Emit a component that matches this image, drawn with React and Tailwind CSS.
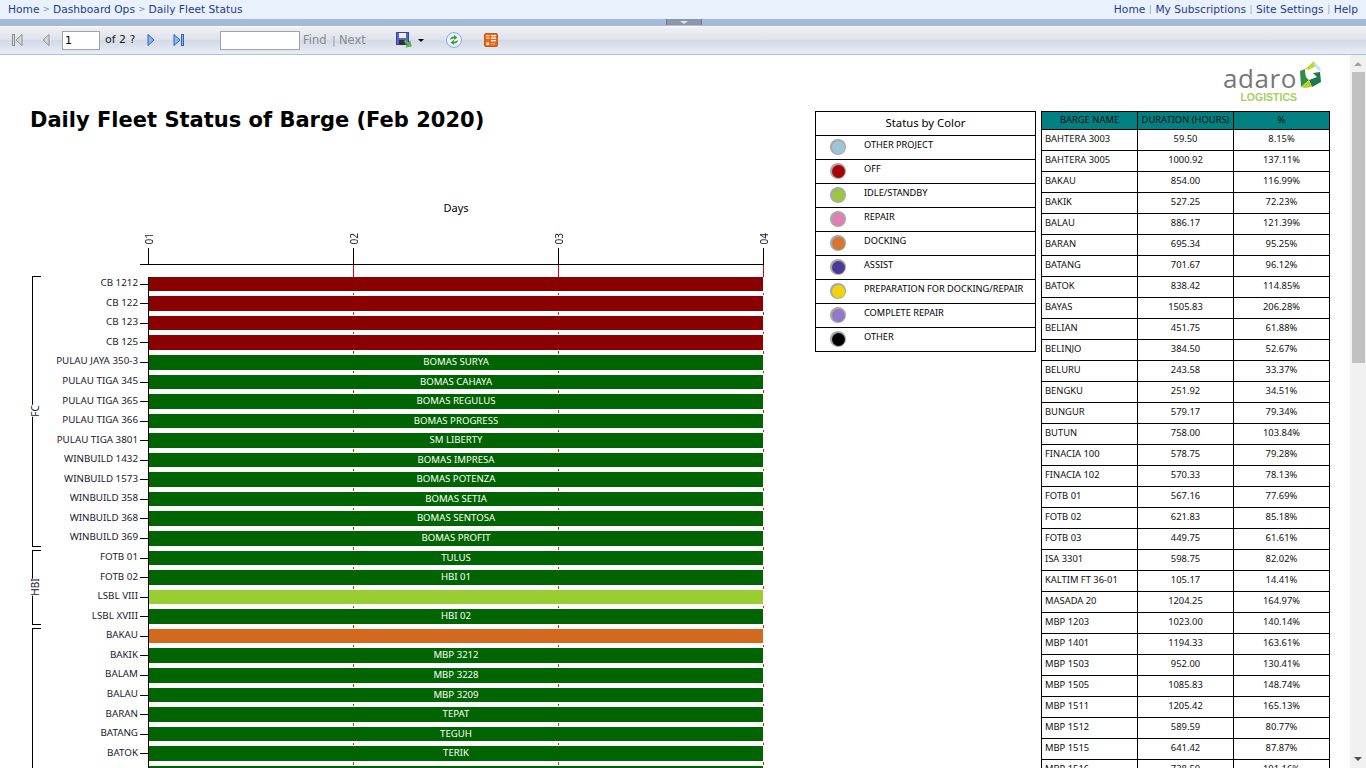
import React from 'react'

const tahoma = "font-['Noto_Sans','Open_Sans',sans-serif]"

const groups = [
  {
    name: 'FC',
    height: 'h-[271px]',
    rows: [
      ['CB 1212', 'off', ''], ['CB 122', 'off', ''], ['CB 123', 'off', ''], ['CB 125', 'off', ''],
      ['PULAU JAYA 350-3', 'on', 'BOMAS SURYA'], ['PULAU TIGA 345', 'on', 'BOMAS CAHAYA'],
      ['PULAU TIGA 365', 'on', 'BOMAS REGULUS'], ['PULAU TIGA 366', 'on', 'BOMAS PROGRESS'],
      ['PULAU TIGA 3801', 'on', 'SM LIBERTY'], ['WINBUILD 1432', 'on', 'BOMAS IMPRESA'],
      ['WINBUILD 1573', 'on', 'BOMAS POTENZA'], ['WINBUILD 358', 'on', 'BOMAS SETIA'],
      ['WINBUILD 368', 'on', 'BOMAS SENTOSA'], ['WINBUILD 369', 'on', 'BOMAS PROFIT'],
    ],
  },
  {
    name: 'HBI',
    height: 'h-[75px]',
    rows: [
      ['FOTB 01', 'on', 'TULUS'], ['FOTB 02', 'on', 'HBI 01'],
      ['LSBL VIII', 'idle', ''], ['LSBL XVIII', 'on', 'HBI 02'],
    ],
  },
  {
    name: '',
    height: 'h-[400px]',
    rows: [
      ['BAKAU', 'dock', ''], ['BAKIK', 'on', 'MBP 3212'], ['BALAM', 'on', 'MBP 3228'],
      ['BALAU', 'on', 'MBP 3209'], ['BARAN', 'on', 'TEPAT'], ['BATANG', 'on', 'TEGUH'],
      ['BATOK', 'on', 'TERIK'], ['', 'on', ''],
    ],
  },
]

const barColors = {
  off: 'bg-[#8b0000]',
  on: 'bg-[#006400]',
  idle: 'bg-[#9acd32]',
  dock: 'bg-[#d2691e]',
}

const legend = [
  ['OTHER PROJECT', 'bg-[#9fc4d8]'],
  ['OFF', 'bg-[#a80008]'],
  ['IDLE/STANDBY', 'bg-[#9ac644]'],
  ['REPAIR', 'bg-[#e07fb0]'],
  ['DOCKING', 'bg-[#d9752f]'],
  ['ASSIST', 'bg-[#4b3a98]'],
  ['PREPARATION FOR DOCKING/REPAIR', 'bg-[#f2d40c]'],
  ['COMPLETE REPAIR', 'bg-[#9478c8]'],
  ['OTHER', 'bg-black'],
]

const barges = [
  ['BAHTERA 3003', '59.50', '8.15%'], ['BAHTERA 3005', '1000.92', '137.11%'], ['BAKAU', '854.00', '116.99%'],
  ['BAKIK', '527.25', '72.23%'], ['BALAU', '886.17', '121.39%'], ['BARAN', '695.34', '95.25%'],
  ['BATANG', '701.67', '96.12%'], ['BATOK', '838.42', '114.85%'], ['BAYAS', '1505.83', '206.28%'],
  ['BELIAN', '451.75', '61.88%'], ['BELINJO', '384.50', '52.67%'], ['BELURU', '243.58', '33.37%'],
  ['BENGKU', '251.92', '34.51%'], ['BUNGUR', '579.17', '79.34%'], ['BUTUN', '758.00', '103.84%'],
  ['FINACIA 100', '578.75', '79.28%'], ['FINACIA 102', '570.33', '78.13%'], ['FOTB 01', '567.16', '77.69%'],
  ['FOTB 02', '621.83', '85.18%'], ['FOTB 03', '449.75', '61.61%'], ['ISA 3301', '598.75', '82.02%'],
  ['KALTIM FT 36-01', '105.17', '14.41%'], ['MASADA 20', '1204.25', '164.97%'], ['MBP 1203', '1023.00', '140.14%'],
  ['MBP 1401', '1194.33', '163.61%'], ['MBP 1503', '952.00', '130.41%'], ['MBP 1505', '1085.83', '148.74%'],
  ['MBP 1511', '1205.42', '165.13%'], ['MBP 1512', '589.59', '80.77%'], ['MBP 1515', '641.42', '87.87%'],
  ['MBP 1516', '738.50', '101.16%'],
]

const NavIcon = ({ dir, last, active }) => {
  const fill = active ? '#8fb4ee' : '#d4d6da'
  const stroke = active ? '#2f62c0' : '#8e9095'
  const flip = dir === 'left' ? 'scale(-1,1) translate(-14,0)' : undefined
  return (
    <svg width="14" height="14" viewBox="0 0 14 14" className="block">
      <g transform={flip}>
        <path d="M3 1.5 L3 12.5 L9 7 Z" fill={fill} stroke={stroke} strokeWidth="1" />
        {last && <rect x="10.5" y="1.5" width="2" height="11" fill={fill} stroke={stroke} strokeWidth="1" />}
      </g>
    </svg>
  )
}

const SaveIcon = () => (
  <svg width="17" height="17" viewBox="0 0 17 17" className="block">
    <rect x="0.5" y="0.5" width="12" height="12" fill="#5a62cc" stroke="#3a42a0" />
    <rect x="3" y="1" width="7" height="5" fill="#eef0fb" />
    <rect x="3" y="8" width="6" height="5" fill="#2e3038" />
    <path d="M7 8 L9 6.5 L11.5 10 L13 8.5 L13.5 14 L8 14 L9.8 12 Z" transform="rotate(-10 10 10) translate(1 1)" fill="#5fb45a" stroke="#3d8a3a" strokeWidth="0.5" />
  </svg>
)

const RefreshIcon = () => (
  <svg width="16" height="16" viewBox="0 0 16 16" className="block">
    <circle cx="8" cy="8" r="7.5" fill="#eef3fb" stroke="#86ade3" />
    <path d="M4 8 C4 5.5 6 4.5 8 4.5 L8 3 L11.5 5.5 L8 8 L8 6.5 C6.8 6.5 5.5 7 4 8 Z" fill="#3f9a3a" />
    <path d="M12 8 C12 10.5 10 11.5 8 11.5 L8 13 L4.5 10.5 L8 8 L8 9.5 C9.2 9.5 10.5 9 12 8 Z" fill="#3f9a3a" />
  </svg>
)

const ReportIcon = () => (
  <svg width="14" height="14" viewBox="0 0 14 14" className="block">
    <rect x="0.5" y="0.5" width="13" height="13" rx="1.5" fill="#e8691c" stroke="#c9560f" />
    <rect x="7" y="2" width="5" height="1.3" fill="#fff" />
    <rect x="7" y="4.5" width="5" height="1.3" fill="#fff" />
    <rect x="7" y="7" width="5" height="1.3" fill="#fff" />
    <rect x="2" y="2" width="3.5" height="1.3" fill="#fbd0b0" />
    <rect x="2" y="4.5" width="3.5" height="1.3" fill="#fbd0b0" />
    <rect x="2.5" y="9.5" width="2.5" height="2.5" fill="#fff" />
    <rect x="7" y="10" width="4" height="1.5" fill="#f59a60" />
  </svg>
)

const AdaroMark = () => (
  <svg width="22" height="27" viewBox="0 0 22 27" className="block">
    <path d="M0 10 L5 8 L6 16 L9 19 L1 26 Z" fill="#2f8f47" />
    <path d="M5 8 L14 0 L15 6 L9 9 Z" fill="#c3d52f" />
    <path d="M14 0 L21 8 L20 11 L15 6 Z" fill="#bfe4f2" />
    <path d="M9 9 L15 6 L20 11 L13 12 L17 16 L9 19 L6 16 L5 8 Z" fill="#ffffff" />
    <path d="M20 11 L21 21 L12 26 L9 19 L17 16 L13 12 Z" fill="#1d7a44" />
    <path d="M1 26 L9 19 L12 26 L5 27 Z" fill="#b7cf2c" />
  </svg>
)

const Sep = () => <span className="text-[#9aa3b5] text-[9px] mx-[3.5px]">|</span>
const Crumb = () => <span className="text-[#8a93a8] text-[9px] mx-[3px]">&gt;</span>

const allRows = groups.flatMap((g) => g.rows)
const gridLeft = ['left-[204px]', 'left-[409px]', 'left-[614px]']

const Chart = () => (
  <div className={`${tahoma} text-[9.8px] text-[#1a1a2e]`}>
    {/* axis head */}
    <div className="pl-[140px]">
      <div className="w-[624px] relative h-[66px] border-b border-black">
        <p className="text-center text-[11px] pl-[8px] pt-[1px] text-black">Days</p>
        {[8, 213, 418, 623].map((x, i) => (
          <div key={x} className="absolute bottom-0 flex flex-col items-center w-[20px]" style={{ left: x - 10 }}>
            <span className="[writing-mode:vertical-rl] rotate-180 text-[10px] leading-[12px] mb-[4px] ml-[1px]">{'0' + (i + 1)}</span>
            <span className="w-px h-[16px] bg-black" />
          </div>
        ))}
      </div>
    </div>
    {/* rows */}
    <div className="flex pt-[11.7px]">
      <div className="w-[32px] shrink-0" />
      <div className="w-[9px] shrink-0 flex flex-col gap-[3px] -mt-[1px]">
        {groups.map((g) => (
          <div key={g.height} className={`relative border-l border-t border-b border-black ${g.height}`}>
            {g.name && (
              <span className="absolute -left-[7px] top-1/2 -translate-y-1/2 bg-white [writing-mode:vertical-rl] rotate-180 w-[14px] leading-[14px] py-[2px] text-center text-[10px]">
                {g.name}
              </span>
            )}
          </div>
        ))}
      </div>
      <div className="w-[107px] shrink-0">
        {allRows.map(([name], index) => (
          <div key={index} className="h-[19.57px] flex items-start justify-end">
            <span className="h-[13.6px] flex items-center whitespace-nowrap">{name}</span>
            <span className="w-[8px] ml-[2px] h-px bg-black mt-[7px] shrink-0" />
          </div>
        ))}
      </div>
      <div className="w-[615px] shrink-0 relative border-l border-black">
        {gridLeft.map((left) => (
          <React.Fragment key={left}>
            <div className={`absolute -top-[12px] h-[12px] w-px bg-[#e00000] ${left}`} />
            <div className={`absolute top-0 bottom-0 w-px bg-[repeating-linear-gradient(transparent_0,transparent_15.6px,#e02020_15.6px,#e02020_18.2px,transparent_18.2px,transparent_19.57px)] ${left}`} />
          </React.Fragment>
        ))}
        <div className="relative">
          {allRows.map(([, status, text], index) => (
            <div key={index} className="h-[19.57px]">
              <div className={`h-[14.6px] w-[614px] pb-[1px] ${barColors[status]} flex items-center justify-center text-white text-[9.6px] leading-none`}>
                {text}
              </div>
            </div>
          ))}
        </div>
      </div>
    </div>
  </div>
)

const Legend = () => (
  <div className={`${tahoma} w-[221px] border border-black text-black`}>
    <div className="h-[23px] flex items-center justify-center text-[11.3px]">Status by Color</div>
    {legend.map(([label, color]) => (
      <div key={label} className="h-[24px] border-t border-black flex items-start pl-[14px]">
        <span className="w-[16px] h-[16px] mt-[3px] rounded-full bg-[#a8a8a8] p-[1.5px] flex shrink-0 blur-[0.3px]">
          <span className={`w-full h-full rounded-full ${color}`} />
        </span>
        <span className="ml-[18px] text-[9.2px] leading-[17px] whitespace-nowrap">{label}</span>
      </div>
    ))}
  </div>
)

const BargeTable = () => (
  <div className={`${tahoma} w-[289px] border-t border-l border-black text-[9.4px] text-[#111]`}>
    <div className="flex h-[18px] bg-[#008080] border-b border-black">
      <div className="w-[96px] border-r border-black flex items-center justify-center">BARGE NAME</div>
      <div className="w-[96px] border-r border-black flex items-center justify-center">DURATION (HOURS)</div>
      <div className="w-[96px] border-r border-black flex items-center justify-center">%</div>
    </div>
    {barges.map(([name, hours, pct]) => (
      <div key={name} className="flex h-[21px] border-b border-black">
        <div className="w-[96px] border-r border-black pl-[3px] leading-[17px]">{name}</div>
        <div className="w-[96px] border-r border-black text-center leading-[17px]">{hours}</div>
        <div className="w-[96px] border-r border-black text-center leading-[17px]">{pct}</div>
      </div>
    ))}
  </div>
)

export default function App() {
  return (
    <div className="h-screen overflow-hidden flex flex-col bg-white font-['DejaVu_Sans',sans-serif]">
      {/* Top links */}
      <div className="h-[19px] bg-[#e9f1fd] flex justify-between items-center pl-[8px] pr-[8px] pt-[1px] text-[10.67px] text-[#1c3a94] shrink-0">
        <div className="flex items-center">
          <span>Home</span>
          <Crumb />
          <span>Dashboard Ops</span>
          <Crumb />
          <span>Daily Fleet Status</span>
        </div>
        <div className="flex items-center">
          <span>Home</span><Sep />
          <span>My Subscriptions</span><Sep />
          <span>Site Settings</span><Sep />
          <span>Help</span>
        </div>
      </div>
      {/* Splitter */}
      <div className="h-[7px] bg-[#a7b9d9] flex justify-center shrink-0 pl-[2px]">
        <div className="w-[36px] h-[6px] bg-[#8d97a9] border-x border-[#6f7888] flex justify-center pt-[2px]">
          <div className="w-0 h-0 border-x-[4px] border-x-transparent border-t-[3px] border-t-[#dfe5ef]" />
        </div>
      </div>
      {/* Toolbar */}
      <div className="h-[29px] shrink-0 pb-[1px] border-t border-t-white border-b border-b-[#a9bfe0] bg-[linear-gradient(#eff1f6,#dde1ec_50%,#d3d9e7_50%,#e9edf5)] flex items-center text-[11px] text-[#222]">
        <div className="ml-[11px]"><NavIcon dir="left" last /></div>
        <div className="ml-[13px]"><NavIcon dir="left" /></div>
        <div className="ml-[10px] w-[38px] h-[19px] bg-white border border-[#a3a3a3] pl-[2px] leading-[17px] text-black">1</div>
        <span className="ml-[5px] w-[40px] whitespace-nowrap">of 2 ?</span>
        <NavIcon dir="right" active />
        <div className="ml-[12px]"><NavIcon dir="right" last active /></div>
        <div className="ml-[35px] w-[80px] h-[19px] bg-white border border-[#a3a3a3]" />
        <span className="ml-[3px] w-[29px] pt-[2px] text-[11.5px] text-[#8b8b8b]">Find</span>
        <span className="w-[7px] pt-[2px] text-[#8f9bb0]">|</span>
        <span className="w-[57px] pt-[2px] text-[11.5px] text-[#8b8b8b]">Next</span>
        <SaveIcon />
        <div className="ml-[5px] mt-[1px] w-0 h-0 border-x-[3px] border-x-transparent border-t-[3px] border-t-black" />
        <div className="ml-[22px]"><RefreshIcon /></div>
        <div className="ml-[22px]"><ReportIcon /></div>
      </div>
      {/* Report */}
      <div className="flex-1 min-h-0 flex">
        <div className="flex-1 min-w-0 overflow-hidden flex flex-col">
          <div className="h-[56px] shrink-0 flex justify-end pr-[28px] pt-[6px]">
            <div className="flex items-start">
              <div className="flex flex-col items-end">
                <span className="font-['Open_Sans',sans-serif] font-medium text-[26px] leading-[25px] mt-[5px] tracking-[0.6px] text-[#777]">adaro</span>
                <span className="text-[10.5px] font-bold leading-[11px] mt-[1px] text-[#a8cf5a] font-['Liberation_Sans',sans-serif]">LOGISTICS</span>
              </div>
              <div className="ml-[3px]"><AdaroMark /></div>
            </div>
          </div>
          <div className="flex">
            <div className="w-[815px] shrink-0">
              <h1 className="pl-[30px] text-[21px] leading-[18px] font-bold text-black whitespace-nowrap h-[88px]">
                Daily Fleet Status of Barge (Feb 2020)
              </h1>
              <Chart />
            </div>
            <div className="w-[226px] shrink-0"><Legend /></div>
            <div className="w-[289px] shrink-0"><BargeTable /></div>
          </div>
        </div>
        {/* Scrollbar */}
        <div className="w-[16px] bg-[#f1f1f1] shrink-0 flex flex-col items-center">
          <div className="mt-[7px] w-0 h-0 border-x-[4px] border-x-transparent border-b-[4px] border-b-[#a3a3a3]" />
          <div className="mt-[6px] w-[13px] h-[291px] bg-[#c1c1c1]" />
          <div className="mt-auto mb-[7px] w-0 h-0 border-x-[4px] border-x-transparent border-t-[4px] border-t-[#505050]" />
        </div>
      </div>
    </div>
  )
}
